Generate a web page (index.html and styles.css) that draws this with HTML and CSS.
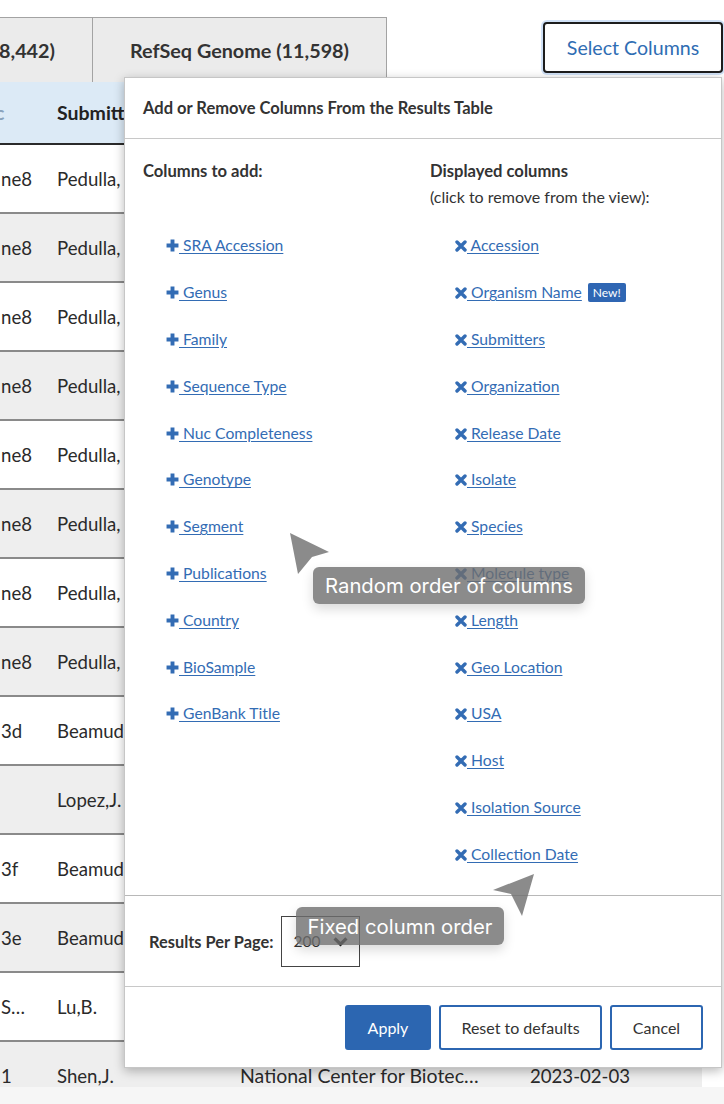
FILE: index.html
```html
<!DOCTYPE html>
<html lang="en">
<head>
<meta charset="utf-8">
<title>Select Columns</title>
<link rel="stylesheet" href="styles.css">
</head>
<body>
<div class="page">
  <div class="topbar">
    <div class="tabs">
      <div class="tab tab-cut">8,442)</div>
      <div class="tab">RefSeq Genome (11,598)</div>
    </div>
    <button class="select-btn">Select Columns</button>
  </div>

  <div class="table">
    <div class="thead">
      <div class="c1"><span class="sort">c</span></div>
      <div class="c2">Submitters</div>
      <div class="c3">Organization</div>
      <div class="c4">Release Date</div>
    </div>
    <div class="row"><div class="c1">ne8</div><div class="c2">Pedulla, M.</div><div class="c3">University of Pittsburgh</div><div class="c4">2023-02-10</div></div>
    <div class="row"><div class="c1">ne8</div><div class="c2">Pedulla, M.</div><div class="c3">University of Pittsburgh</div><div class="c4">2023-02-10</div></div>
    <div class="row"><div class="c1">ne8</div><div class="c2">Pedulla, M.</div><div class="c3">University of Pittsburgh</div><div class="c4">2023-02-10</div></div>
    <div class="row"><div class="c1">ne8</div><div class="c2">Pedulla, M.</div><div class="c3">University of Pittsburgh</div><div class="c4">2023-02-10</div></div>
    <div class="row"><div class="c1">ne8</div><div class="c2">Pedulla, M.</div><div class="c3">University of Pittsburgh</div><div class="c4">2023-02-10</div></div>
    <div class="row"><div class="c1">ne8</div><div class="c2">Pedulla, M.</div><div class="c3">University of Pittsburgh</div><div class="c4">2023-02-10</div></div>
    <div class="row"><div class="c1">ne8</div><div class="c2">Pedulla, M.</div><div class="c3">University of Pittsburgh</div><div class="c4">2023-02-10</div></div>
    <div class="row"><div class="c1">ne8</div><div class="c2">Pedulla, M.</div><div class="c3">University of Pittsburgh</div><div class="c4">2023-02-10</div></div>
    <div class="row"><div class="c1">3d</div><div class="c2">Beamud,B.</div><div class="c3">Institut Pasteur</div><div class="c4">2023-02-08</div></div>
    <div class="row"><div class="c1"></div><div class="c2">Lopez,J.</div><div class="c3">Universidad de Chile</div><div class="c4">2023-02-07</div></div>
    <div class="row"><div class="c1">3f</div><div class="c2">Beamud,B.</div><div class="c3">Institut Pasteur</div><div class="c4">2023-02-06</div></div>
    <div class="row"><div class="c1">3e</div><div class="c2">Beamud,B.</div><div class="c3">Institut Pasteur</div><div class="c4">2023-02-06</div></div>
    <div class="row"><div class="c1">S…</div><div class="c2">Lu,B.</div><div class="c3">Nanjing University</div><div class="c4">2023-02-04</div></div>
    <div class="row"><div class="c1">1</div><div class="c2">Shen,J.</div><div class="c3">National Center for Biotec…</div><div class="c4">2023-02-03</div></div>
  </div>
  <div class="hscroll"></div>

  <div class="modal">
    <div class="modal-head">Add or Remove Columns From the Results Table</div>
    <div class="modal-body">
      <div class="col">
        <div class="col-head"><strong>Columns to add:</strong></div>
        <ul class="items items-add">
          <li><a href="#"><svg class="ico" viewBox="0 0 12 12"><path d="M6 0.5v11M0.5 6h11"/></svg> SRA Accession</a></li>
          <li><a href="#"><svg class="ico" viewBox="0 0 12 12"><path d="M6 0.5v11M0.5 6h11"/></svg> Genus</a></li>
          <li><a href="#"><svg class="ico" viewBox="0 0 12 12"><path d="M6 0.5v11M0.5 6h11"/></svg> Family</a></li>
          <li><a href="#"><svg class="ico" viewBox="0 0 12 12"><path d="M6 0.5v11M0.5 6h11"/></svg> Sequence Type</a></li>
          <li><a href="#"><svg class="ico" viewBox="0 0 12 12"><path d="M6 0.5v11M0.5 6h11"/></svg> Nuc Completeness</a></li>
          <li><a href="#"><svg class="ico" viewBox="0 0 12 12"><path d="M6 0.5v11M0.5 6h11"/></svg> Genotype</a></li>
          <li><a href="#"><svg class="ico" viewBox="0 0 12 12"><path d="M6 0.5v11M0.5 6h11"/></svg> Segment</a></li>
          <li><a href="#"><svg class="ico" viewBox="0 0 12 12"><path d="M6 0.5v11M0.5 6h11"/></svg> Publications</a></li>
          <li><a href="#"><svg class="ico" viewBox="0 0 12 12"><path d="M6 0.5v11M0.5 6h11"/></svg> Country</a></li>
          <li><a href="#"><svg class="ico" viewBox="0 0 12 12"><path d="M6 0.5v11M0.5 6h11"/></svg> BioSample</a></li>
          <li><a href="#"><svg class="ico" viewBox="0 0 12 12"><path d="M6 0.5v11M0.5 6h11"/></svg> GenBank Title</a></li>
        </ul>
      </div>
      <div class="col">
        <div class="col-head"><strong>Displayed columns</strong><br><span class="sub">(click to remove from the view):</span></div>
        <ul class="items items-rm">
          <li><a href="#"><svg class="ico x" viewBox="0 0 12 12"><path d="M2 2L10 10M10 2L2 10"/></svg> Accession</a></li>
          <li><a href="#"><svg class="ico x" viewBox="0 0 12 12"><path d="M2 2L10 10M10 2L2 10"/></svg> Organism Name </a><span class="badge">New!</span></li>
          <li><a href="#"><svg class="ico x" viewBox="0 0 12 12"><path d="M2 2L10 10M10 2L2 10"/></svg> Submitters</a></li>
          <li><a href="#"><svg class="ico x" viewBox="0 0 12 12"><path d="M2 2L10 10M10 2L2 10"/></svg> Organization</a></li>
          <li><a href="#"><svg class="ico x" viewBox="0 0 12 12"><path d="M2 2L10 10M10 2L2 10"/></svg> Release Date</a></li>
          <li><a href="#"><svg class="ico x" viewBox="0 0 12 12"><path d="M2 2L10 10M10 2L2 10"/></svg> Isolate</a></li>
          <li><a href="#"><svg class="ico x" viewBox="0 0 12 12"><path d="M2 2L10 10M10 2L2 10"/></svg> Species</a></li>
          <li><a href="#"><svg class="ico x" viewBox="0 0 12 12"><path d="M2 2L10 10M10 2L2 10"/></svg> Molecule type</a></li>
          <li><a href="#"><svg class="ico x" viewBox="0 0 12 12"><path d="M2 2L10 10M10 2L2 10"/></svg> Length</a></li>
          <li><a href="#"><svg class="ico x" viewBox="0 0 12 12"><path d="M2 2L10 10M10 2L2 10"/></svg> Geo Location</a></li>
          <li><a href="#"><svg class="ico x" viewBox="0 0 12 12"><path d="M2 2L10 10M10 2L2 10"/></svg> USA</a></li>
          <li><a href="#"><svg class="ico x" viewBox="0 0 12 12"><path d="M2 2L10 10M10 2L2 10"/></svg> Host</a></li>
          <li><a href="#"><svg class="ico x" viewBox="0 0 12 12"><path d="M2 2L10 10M10 2L2 10"/></svg> Isolation Source</a></li>
          <li><a href="#"><svg class="ico x" viewBox="0 0 12 12"><path d="M2 2L10 10M10 2L2 10"/></svg> Collection Date</a></li>
        </ul>
      </div>
    </div>
    <div class="modal-perpage">
      <span class="pp-label">Results Per Page:</span>
      <div class="pp-select"><span>200</span><svg class="chev" viewBox="0 0 14 10"><path d="M1.5 2l5.5 5.5 5.5-5.5"/></svg></div>
    </div>
    <div class="modal-foot">
      <button class="btn btn-primary">Apply</button>
      <button class="btn">Reset to defaults</button>
      <button class="btn">Cancel</button>
    </div>
  </div>

  <svg class="pointer pointer-1" viewBox="0 0 42 46"><path d="M0 3L39 22L22 27L8 44Z"/></svg>
  <div class="tip tip-1">Random order of columns</div>

  <svg class="pointer pointer-2" viewBox="0 0 42 46"><path d="M41 1L0 17L18 21L29 43Z"/></svg>
  <div class="tip tip-2">Fixed column order</div>
</div>
</body>
</html>
```

FILE: styles.css
```css
* { box-sizing: border-box; }

body {
  margin: 0;
  background: #ffffff;
  font-family: Lato, "Noto Sans", sans-serif;
  color: #222;
}

.page {
  position: relative;
  width: 724px;
  height: 1104px;
  overflow: hidden;
}

/* ---------- top bar ---------- */
.topbar {
  display: flex;
  justify-content: space-between;
  align-items: flex-start;
  padding-top: 17px;
  height: 82px;
}

.tabs { display: flex; }

.tab {
  height: 65px;
  display: flex;
  align-items: center;
  justify-content: center;
  background: #ebebeb;
  border: 1px solid #a3a3a3;
  border-bottom: none;
  font-size: 19.8px;
  font-weight: 700;
  color: #333;
  white-space: nowrap;
}

.tab-cut {
  width: 92px;
  justify-content: flex-end;
  padding-right: 37px;
  border-left: none;
  border-right: none;
  overflow: hidden;
}

.tab + .tab { width: 295px; }
.tab-cut + .tab { border-left: 1px solid #a3a3a3; }

.select-btn {
  margin-top: 5px;
  margin-right: 1px;
  width: 180px;
  height: 51px;
  background: #fff;
  border: 2px solid #1d1d1d;
  border-radius: 4px;
  box-shadow: 0 0 0 2px rgba(120, 170, 230, 0.35);
  color: #2f6db3;
  font-family: inherit;
  font-size: 19.6px;
}

/* ---------- table ---------- */
.table {
  width: 702px;
  height: 1005px;
  overflow: hidden;
}

.thead, .row {
  display: flex;
  align-items: center;
  white-space: nowrap;
}

.thead {
  height: 63px;
  background: #dceaf6;
  border-bottom: 2px solid #2a2a2a;
  font-weight: 700;
  font-size: 19.5px;
}

.row {
  height: 69px;
  border-bottom: 2px solid #8a8a8a;
  font-size: 18.6px;
  color: #2a2a2a;
}

.row:nth-child(odd) { background: #eeeeee; }
.row:nth-child(even) { background: #ffffff; }

.c1 { width: 57px; overflow: hidden; padding-left: 1px; }
.c2 { width: 183px; overflow: hidden; }
.c3 { width: 290px; overflow: hidden; font-size: 19.5px; }
.c4 { width: 172px; overflow: hidden; }

.sort {
  display: inline-block;
  margin-left: -6px;
  color: #8aa2bb;
  font-weight: 700;
}

.hscroll {
  height: 17px;
  background: #f6f6f6;
}

/* ---------- modal ---------- */
.modal {
  position: absolute;
  left: 124px;
  top: 77px;
  width: 598px;
  height: 991px;
  background: #fff;
  border: 1px solid #c6c6c6;
  box-shadow: 0 3px 10px rgba(0, 0, 0, 0.28);
  display: flex;
  flex-direction: column;
}

.modal-head {
  height: 61px;
  flex: none;
  display: flex;
  align-items: center;
  padding-left: 18px;
  font-size: 16.5px;
  font-weight: 700;
  color: #333;
  border-bottom: 1px solid #c8c8c8;
}

.modal-body {
  flex: 1;
  display: grid;
  grid-template-columns: 287px 1fr;
  padding: 19px 0 0 18px;
}

.col-head {
  height: 52px;
  font-size: 16.6px;
  line-height: 26px;
  color: #333;
}

.col-head .sub { font-size: 16px; }

.items {
  list-style: none;
  margin: 12px 0 0;
  padding: 0 0 0 23px;
}

.items-rm { padding-left: 25px; }

.items li {
  height: 46.8px;
  display: flex;
  align-items: center;
  font-size: 15.7px;
}

.items a {
  color: #336cb4;
  text-decoration: underline;
  text-underline-offset: 2px;
}

.ico {
  width: 13px;
  height: 13px;
  vertical-align: -1px;
  fill: none;
  stroke: #336cb4;
  stroke-width: 3.6;
}

.ico.x { width: 12px; height: 12px; stroke-width: 3.4; stroke-linecap: round; }

.badge {
  margin-left: 6px;
  background: #2f66b3;
  color: #fff;
  font-size: 12px;
  line-height: 19px;
  padding: 0 5px;
  border-radius: 2px;
}

.modal-perpage {
  height: 91px;
  flex: none;
  display: flex;
  align-items: center;
  padding-left: 24px;
  border-top: 1px solid #b8b8b8;
}

.pp-label {
  font-size: 16.4px;
  font-weight: 700;
  color: #333;
}

.pp-select {
  margin-left: 7px;
  width: 79px;
  height: 51px;
  border: 1px solid #444;
  display: flex;
  align-items: center;
  padding-left: 12px;
  gap: 12px;
  font-size: 15.5px;
  color: #333;
}

.chev {
  width: 15px;
  height: 11px;
  fill: none;
  stroke: #222;
  stroke-width: 3;
}

.modal-foot {
  height: 81px;
  flex: none;
  display: flex;
  justify-content: flex-end;
  align-items: center;
  gap: 8px;
  padding-right: 18px;
  border-top: 1px solid #c8c8c8;
}

.btn {
  height: 45px;
  background: #fff;
  border: 2px solid #2c66b1;
  border-radius: 3px;
  font-family: inherit;
  font-size: 16px;
  color: #333;
}

.btn:nth-child(2) { width: 163px; }
.btn:nth-child(3) { width: 93px; }

.btn-primary {
  width: 86px;
  background: #2c66b1;
  color: #fff;
}

/* ---------- annotations ---------- */
.tip {
  position: absolute;
  display: flex;
  align-items: center;
  justify-content: center;
  background: rgba(110, 110, 110, 0.8);
  color: #fff;
  font-family: Inter, "Noto Sans", sans-serif;
  font-size: 20.3px;
  border-radius: 6px;
  box-shadow: 0 5px 12px rgba(0, 0, 0, 0.15);
  white-space: nowrap;
}

.tip-1 { left: 313px; top: 567px; width: 272px; height: 37px; }
.tip-2 { left: 296px; top: 907px; width: 208px; height: 38px; }

.pointer {
  position: absolute;
  width: 42px;
  height: 46px;
  fill: rgba(110, 110, 110, 0.8);
}

.pointer-1 { left: 290px; top: 530px; }
.pointer-2 { left: 493px; top: 873px; }
```
